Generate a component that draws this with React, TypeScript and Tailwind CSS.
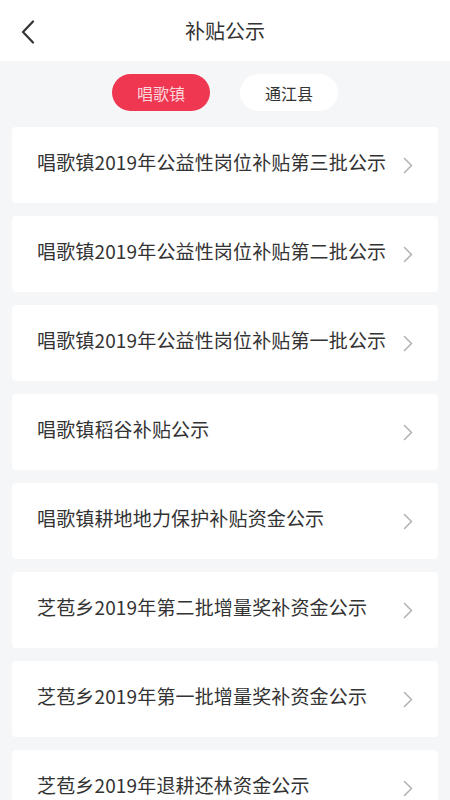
import { useState } from 'react'

const items = [
  '唱歌镇2019年公益性岗位补贴第三批公示',
  '唱歌镇2019年公益性岗位补贴第二批公示',
  '唱歌镇2019年公益性岗位补贴第一批公示',
  '唱歌镇稻谷补贴公示',
  '唱歌镇耕地地力保护补贴资金公示',
  '芝苞乡2019年第二批增量奖补资金公示',
  '芝苞乡2019年第一批增量奖补资金公示',
  '芝苞乡2019年退耕还林资金公示',
]

const tabs = ['唱歌镇', '通江县']

function Chevron() {
  return (
    <svg width="10" height="17" viewBox="0 0 10 17" fill="none" className="shrink-0">
      <path d="M1.5 1.5L8.5 8.5L1.5 15.5" stroke="#b3b3b3" strokeWidth="1.6" strokeLinecap="round" strokeLinejoin="round" />
    </svg>
  )
}

export default function App() {
  const [active, setActive] = useState(0)

  return (
    <div
      className="min-h-screen bg-[#f5f6f8]"
      style={{ fontFamily: '"Noto Sans CJK SC", "Noto Sans", sans-serif' }}
    >
      <header className="relative flex h-[61px] items-center justify-center bg-white">
        <button className="absolute left-[20px] top-[20px] p-0">
          <svg width="16" height="24" viewBox="0 0 16 24" fill="none">
            <path d="M13 1.5L3 12L13 22.5" stroke="#333333" strokeWidth="2.2" strokeLinecap="round" strokeLinejoin="round" />
          </svg>
        </button>
        <h1 className="text-[20px] text-[#333333]">补贴公示</h1>
      </header>

      <div className="flex justify-center gap-[30px] pt-[13px] pb-[16px]">
        {tabs.map((t, i) => (
          <button
            key={t}
            onClick={() => setActive(i)}
            className={
              i === active
                ? 'flex h-[37px] w-[98px] items-center justify-center rounded-full bg-[#ef3752] text-[16px] text-[#fbd6db]'
                : 'flex h-[37px] w-[98px] items-center justify-center rounded-full bg-white text-[16px] text-[#333333]'
            }
          >
            {t}
          </button>
        ))}
      </div>

      <ul className="flex flex-col gap-[13px] px-[12px]">
        {items.map((it) => (
          <li
            key={it}
            className="flex h-[76px] items-center justify-between rounded-[4px] bg-white pl-[25px] pr-[25px]"
          >
            <span className="mb-[8px] text-[19px] leading-none tracking-[0.15px] text-[#333333]">{it}</span>
            <Chevron />
          </li>
        ))}
      </ul>
    </div>
  )
}
